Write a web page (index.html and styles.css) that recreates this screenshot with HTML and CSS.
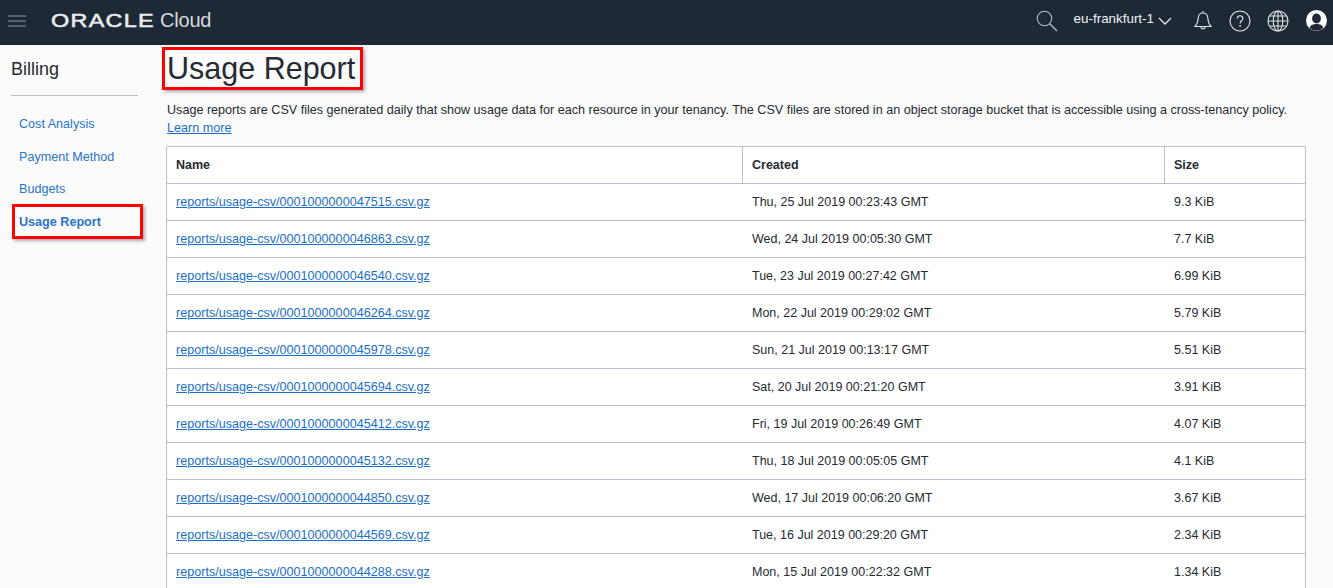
FILE: index.html
```html
<!DOCTYPE html>
<html lang="en">
<head>
<meta charset="utf-8">
<title>Usage Report</title>
<link rel="stylesheet" href="styles.css">
</head>
<body>
<header class="topbar">
  <div class="topbar-left">
    <svg class="menu-icon" width="18" height="12" viewBox="0 0 18 12"><path d="M0 1h18M0 6h18M0 11h18" stroke="#8f98a3" stroke-width="1.2" fill="none"/></svg>
    <span class="logo-mark">ORACLE</span>
    <span class="logo-cloud">Cloud</span>
  </div>
  <div class="topbar-right">
    <svg class="icon-search" width="22" height="22" viewBox="0 0 22 22" fill="none" stroke="#b5bac0" stroke-width="1.1"><circle cx="8.5" cy="8.5" r="7.2"/><path d="M13.8 13.8l7.2 7.2" stroke-width="1.4"/></svg>
    <span class="region">eu-frankfurt-1</span>
    <svg class="icon-chevron" width="14" height="8" viewBox="0 0 14 8" fill="none" stroke="#e8eaec" stroke-width="1.3"><path d="M1 1l6 6 6-6"/></svg>
    <svg class="icon-bell" width="18" height="21" viewBox="0 0 18 21" fill="none" stroke="#e0e3e6" stroke-width="1.1"><path d="M9 1v2M9 3c-3 0-4.600 2.200-4.800 5-.2 3.500-.8 6-3.200 8.500h16c-2.400-2.500-3-5-3.200-8.500C13.600 5.200 12 3 9 3zM7 17c0 2.600 4 2.600 4 0"/></svg>
    <svg class="icon-help" width="22" height="22" viewBox="0 0 22 22" fill="none" stroke="#e8eaec" stroke-width="1.1"><circle cx="11" cy="11" r="10"/><path d="M8.300 8.500c0-3.600 5.600-3.600 5.600 0 0 2.300-2.800 2.300-2.800 5"/><path d="M11.100 15.200v1.600" stroke-width="1.500"/></svg>
    <svg class="icon-globe" width="22" height="22" viewBox="0 0 22 22" fill="none" stroke="#e0e3e6" stroke-width="1.1"><circle cx="11" cy="11" r="10"/><ellipse cx="11" cy="11" rx="4.800" ry="10"/><path d="M11 1v20M1 11h20M2.400 6h17.200M2.400 16h17.200"/></svg>
    <svg class="icon-user" width="21" height="21" viewBox="0 0 21 21"><circle cx="10.500" cy="10.500" r="10.500" fill="#fff"/><ellipse cx="10.500" cy="8.500" rx="4.400" ry="5" fill="#1e2936"/><path d="M3.600 18c1-3.200 3.400-4 6.900-4s5.900.8 6.900 4a10 10 0 0 1-13.800 0z" fill="#1e2936"/></svg>
  </div>
</header>
<div class="page">
  <aside class="sidebar">
    <h2 class="sidebar-title">Billing</h2>
    <nav class="sidebar-nav">
      <a class="nav-link" href="#">Cost Analysis</a>
      <a class="nav-link" href="#">Payment Method</a>
      <a class="nav-link" href="#">Budgets</a>
      <a class="nav-link nav-active" href="#">Usage Report</a>
    </nav>
  </aside>
  <main class="content">
    <h1 class="title">Usage Report</h1>
    <p class="intro">Usage reports are CSV files generated daily that show usage data for each resource in your tenancy. The CSV files are stored in an object storage bucket that is accessible using a cross-tenancy policy. <a href="#">Learn more</a></p>
    <table class="reports">
      <colgroup><col class="col-name"><col class="col-created"><col class="col-size"></colgroup>
      <thead><tr><th>Name</th><th>Created</th><th>Size</th></tr></thead>
      <tbody>
        <tr><td><a href="#">reports/usage-csv/0001000000047515.csv.gz</a></td><td>Thu, 25 Jul 2019 00:23:43 GMT</td><td>9.3 KiB</td></tr>
        <tr><td><a href="#">reports/usage-csv/0001000000046863.csv.gz</a></td><td>Wed, 24 Jul 2019 00:05:30 GMT</td><td>7.7 KiB</td></tr>
        <tr><td><a href="#">reports/usage-csv/0001000000046540.csv.gz</a></td><td>Tue, 23 Jul 2019 00:27:42 GMT</td><td>6.99 KiB</td></tr>
        <tr><td><a href="#">reports/usage-csv/0001000000046264.csv.gz</a></td><td>Mon, 22 Jul 2019 00:29:02 GMT</td><td>5.79 KiB</td></tr>
        <tr><td><a href="#">reports/usage-csv/0001000000045978.csv.gz</a></td><td>Sun, 21 Jul 2019 00:13:17 GMT</td><td>5.51 KiB</td></tr>
        <tr><td><a href="#">reports/usage-csv/0001000000045694.csv.gz</a></td><td>Sat, 20 Jul 2019 00:21:20 GMT</td><td>3.91 KiB</td></tr>
        <tr><td><a href="#">reports/usage-csv/0001000000045412.csv.gz</a></td><td>Fri, 19 Jul 2019 00:26:49 GMT</td><td>4.07 KiB</td></tr>
        <tr><td><a href="#">reports/usage-csv/0001000000045132.csv.gz</a></td><td>Thu, 18 Jul 2019 00:05:05 GMT</td><td>4.1 KiB</td></tr>
        <tr><td><a href="#">reports/usage-csv/0001000000044850.csv.gz</a></td><td>Wed, 17 Jul 2019 00:06:20 GMT</td><td>3.67 KiB</td></tr>
        <tr><td><a href="#">reports/usage-csv/0001000000044569.csv.gz</a></td><td>Tue, 16 Jul 2019 00:29:20 GMT</td><td>2.34 KiB</td></tr>
        <tr><td><a href="#">reports/usage-csv/0001000000044288.csv.gz</a></td><td>Mon, 15 Jul 2019 00:22:32 GMT</td><td>1.34 KiB</td></tr>
      </tbody>
    </table>
  </main>
</div>
</body>
</html>
```
FILE: styles.css
```css
html, body { margin: 0; height: 588px; overflow: hidden; }
body { background: #fbfbfb; color: #252a31; font-family: "Liberation Sans", Arial, sans-serif; font-size: 12px; }
a { color: #1a6fc9; }

.topbar { height: 45px; box-sizing: border-box; padding-bottom: 4px; background: #1e2936; display: flex; align-items: center; justify-content: space-between; }
.topbar-left { display: flex; align-items: center; padding-left: 8px; }
.menu-icon { display: block; margin-right: 25px; }
.logo-mark { color: #eceef0; font-size: 18px; font-weight: 400; -webkit-text-stroke: .5px #eceef0; letter-spacing: 1px; width: 109px; transform: scaleX(1.3); transform-origin: left center; line-height: 20px; }
.logo-cloud { color: #d8dbde; font-size: 20px; letter-spacing: -.2px; }
.topbar-right { display: flex; align-items: center; padding-right: 6px; }
.icon-search { margin-right: 16px; }
.region { color: #f2f4f6; font-size: 13.400px; margin-bottom: 5px; }
.icon-chevron { margin: 1px 0 0 4px; }
.icon-bell { margin-left: 22px; }
.icon-help { margin-left: 17px; }
.icon-globe { margin-left: 16px; }
.icon-user { margin-left: 17px; }

.page { display: flex; }
.sidebar { width: 167px; flex: none; box-sizing: border-box; padding: 0 29px 0 11px; }
.sidebar-title { font-size: 18px; font-weight: 400; margin: 14px 0 0; line-height: 21px; padding-bottom: 15px; border-bottom: 1px solid #bcbdc7; }
.sidebar-nav { display: flex; flex-direction: column; padding-top: 12px; }
.nav-link { color: #2a74c9; font-size: 12.600px; line-height: 32.600px; padding-left: 8px; text-decoration: none; }
.nav-active { font-weight: 700; position: relative; }
.nav-active::after { content: ""; position: absolute; left: 1px; top: -2px; width: 125px; height: 29px; border: 3px solid #f00; box-shadow: 2px 2px 3px rgba(90,70,90,.45); }

.content { width: 1139px; }
.title { display: inline-block; margin: 2px 0 0 -5px; padding: 0 5px 1px 2px; border: 3px solid #f00; box-shadow: 2px 2px 3px rgba(90,70,90,.45); font-size: 30.500px; font-weight: 400; line-height: 36px; }
.intro { margin: 11px 0 9px; line-height: 18px; font-size: 12.600px; }
.reports { width: 1140px; margin-left: -1px; table-layout: fixed; border-collapse: separate; border-spacing: 0; background: #fff; border-top: 1px solid #bcbdc7; border-left: 1px solid #bcbdc7; border-right: 1px solid #bcbdc7; border-radius: 2px 2px 0 0; font-size: 12.500px; }
.reports a { font-size: 12.600px; }
.col-name { width: 576px; }
.col-created { width: 422px; }
.reports th { padding: 0 9px; text-align: left; font-weight: 700; font-size: 12.500px; border-bottom: 1px solid #bcbdc7; border-right: 1px solid #bcbdc7; box-sizing: border-box; height: 37px; }
.reports th:last-child { border-right: 0; }
.reports td { height: 37px; box-sizing: border-box; padding: 0 9px; border-bottom: 1px solid #bcbdc7; }
```
